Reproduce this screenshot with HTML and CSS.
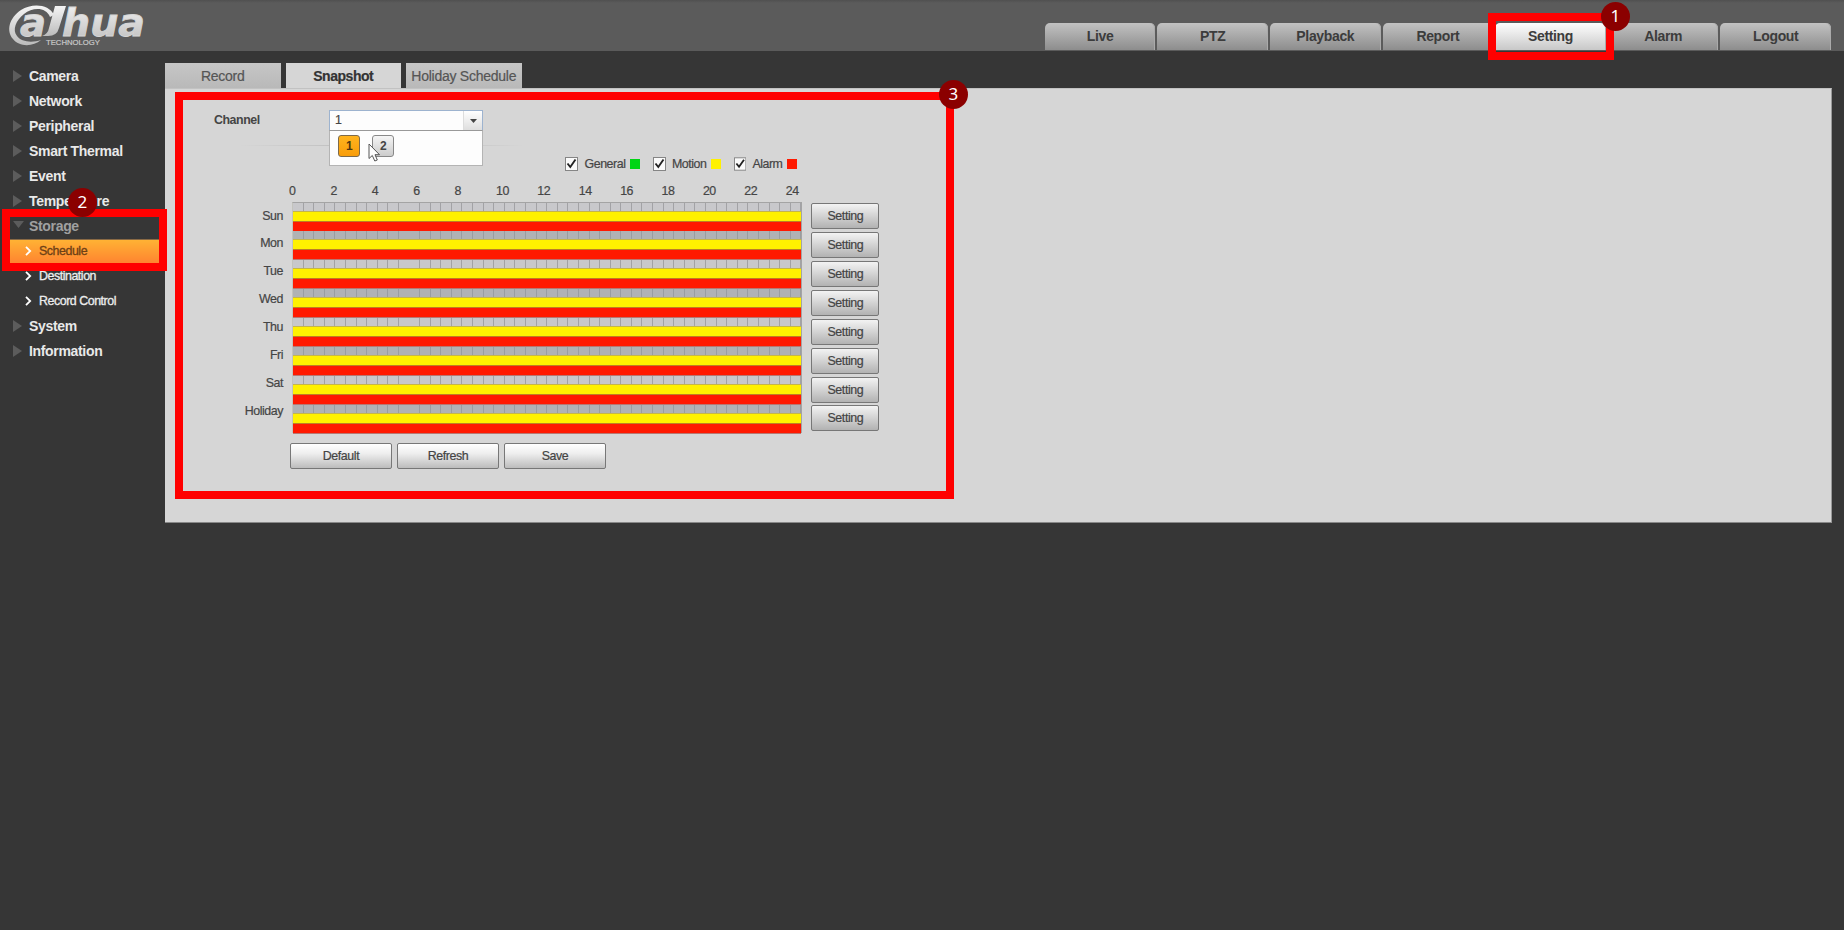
FILE: index.html
```
<!DOCTYPE html>
<html lang="en">
<head>
<meta charset="utf-8">
<title>Storage - Schedule</title>
<link rel="stylesheet" href="styles.css">
</head>
<body>
<header class="header">
  <svg class="logo" width="150" height="51" viewBox="0 0 150 51">
    <defs><linearGradient id="silver" x1="0" y1="0" x2="0" y2="1"><stop offset="0" stop-color="#f4f4f4"/><stop offset="1" stop-color="#bcbcbc"/></linearGradient></defs>
    <path fill="url(#silver)" d="M54 15C49 4 32 3 21 10C9 18 6 31 13 39C19 47 33 47 41 40C32 43 21 42 17 36C12 30 16 20 24 14C33 7 46 7 50 17Z"/>
    <path fill="url(#silver)" d="M55 6H66L59 28Q57 36 48 36H42Q48 34 49 28Z"/>
    <text class="logo-word" x="20" y="35.500" textLength="26" lengthAdjust="spacingAndGlyphs">a</text>
    <text class="logo-word" x="62" y="35.500" textLength="83" lengthAdjust="spacingAndGlyphs">hua</text>
    <text class="logo-tag" x="46" y="45" textLength="54" lengthAdjust="spacingAndGlyphs">TECHNOLOGY</text>
  </svg>
  <nav class="nav">
    <a class="nav-tab">Live</a><a class="nav-tab">PTZ</a><a class="nav-tab">Playback</a><a class="nav-tab">Report</a><a class="nav-tab active">Setting</a><a class="nav-tab">Alarm</a><a class="nav-tab">Logout</a>
  </nav>
</header>
<div class="body">
  <aside class="side">
    <div class="item"><i class="tri"></i>Camera</div>
    <div class="item"><i class="tri"></i>Network</div>
    <div class="item"><i class="tri"></i>Peripheral</div>
    <div class="item"><i class="tri"></i>Smart Thermal</div>
    <div class="item"><i class="tri"></i>Event</div>
    <div class="item"><i class="tri"></i>Temperature</div>
    <div class="item open"><i class="tri"></i>Storage</div>
    <div class="sub current"><svg class="chev" width="7" height="10" viewBox="0 0 7 10"><path d="M1 .8L5.200 5L1 9.200"/></svg>Schedule</div>
    <div class="sub"><svg class="chev" width="7" height="10" viewBox="0 0 7 10"><path d="M1 .8L5.200 5L1 9.200"/></svg>Destination</div>
    <div class="sub"><svg class="chev" width="7" height="10" viewBox="0 0 7 10"><path d="M1 .8L5.200 5L1 9.200"/></svg>Record Control</div>
    <div class="item"><i class="tri"></i>System</div>
    <div class="item"><i class="tri"></i>Information</div>
  </aside>
  <main class="main">
    <div class="tabs"><div class="tab">Record</div><div class="tab on">Snapshot</div><div class="tab">Holiday Schedule</div></div>
    <section class="panel">
      <div class="channel">
        <span class="channel-label">Channel</span>
        <div class="combo"><span class="combo-value">1</span><span class="combo-arrow"></span>
          <div class="drop"><span class="num picked">1</span><span class="num">2</span>
            <svg class="cursor" width="13" height="20" viewBox="0 0 13 20"><path d="M1 1V15.500L4.300 12.500L6.800 18L9.300 17L7 11.700H11.500Z"/></svg>
          </div>
        </div>
      </div>
      <div class="rule"></div>
      <div class="legend">
        <label class="key"><svg class="check" width="13" height="14" viewBox="0 0 13 14"><rect x=".5" y=".5" width="12" height="13"/><path d="M2.500 6.500L5.300 10L10.500 2.500"/></svg>General<i class="chip green"></i></label>
        <label class="key"><svg class="check" width="13" height="14" viewBox="0 0 13 14"><rect x=".5" y=".5" width="12" height="13"/><path d="M2.500 6.500L5.300 10L10.500 2.500"/></svg>Motion<i class="chip yellow"></i></label>
        <label class="key"><svg class="check" width="13" height="14" viewBox="0 0 13 14"><rect x=".5" y=".5" width="12" height="13"/><path d="M2.500 6.500L5.300 10L10.500 2.500"/></svg>Alarm<i class="chip red"></i></label>
      </div>
      <div class="hours"><span>0</span><span>2</span><span>4</span><span>6</span><span>8</span><span>10</span><span>12</span><span>14</span><span>16</span><span>18</span><span>20</span><span>22</span><span>24</span></div>
      <div class="schedule">
        <div class="days"><span>Sun</span><span>Mon</span><span>Tue</span><span>Wed</span><span>Thu</span><span>Fri</span><span>Sat</span><span>Holiday</span></div>
        <div class="chart">
          <div class="day"></div><div class="day"></div><div class="day"></div><div class="day"></div><div class="day"></div><div class="day"></div><div class="day"></div><div class="day"></div>
        </div>
        <div class="edits">
          <button class="btn">Setting</button><button class="btn">Setting</button><button class="btn">Setting</button><button class="btn">Setting</button><button class="btn">Setting</button><button class="btn">Setting</button><button class="btn">Setting</button><button class="btn">Setting</button>
        </div>
      </div>
      <div class="actions"><button class="btn wide">Default</button><button class="btn wide">Refresh</button><button class="btn wide">Save</button></div>
    </section>
  </main>
</div>
<div class="mark mark-nav"></div>
<div class="mark mark-side"></div>
<div class="mark mark-panel"></div>
<div class="step step-nav">1</div>
<div class="step step-side">2</div>
<div class="step step-panel">3</div>
</body>
</html>
```

FILE: styles.css
```
* { box-sizing: border-box; }
body {
  margin: 0;
  height: 930px;
  overflow: hidden;
  background: #363636;
  font-family: "Liberation Sans", Arial, sans-serif;
  font-size: 12.4px;
  letter-spacing: -.45px;
  color: #454545;
}

/* Header */
.header {
  height: 51px;
  display: flex;
  justify-content: space-between;
  align-items: flex-end;
  padding-right: 13px;
  background: linear-gradient(#505050, #5b5b5b 3px, #5b5b5b);
  letter-spacing: 0;
}
.logo { display: block; }
.logo-word { font: italic bold 37px "DejaVu Sans", sans-serif; fill: url(#silver); stroke: #d6d6d6; stroke-width: .8px; }
.logo-tag { font: 8px "Liberation Sans", sans-serif; fill: #c9c9c9; stroke: #c9c9c9; stroke-width: .2px; }
.nav { display: flex; gap: 2px; padding-bottom: 1px; }
.nav-tab {
  width: 110.600px;
  height: 27px;
  line-height: 27px;
  text-align: center;
  font-size: 14px;
  letter-spacing: -.35px;
  font-weight: bold;
  color: #3c3c3c;
  border-radius: 5px 5px 0 0;
  background: linear-gradient(#c2c2c2, #8d8d8d);
  box-shadow: inset -1px 0 #aaa;
}
.nav-tab.active { background: linear-gradient(#fff, #c8c8c8); }

/* Sidebar */
.body { display: flex; height: 471px; }
.side { width: 165px; padding-top: 12.500px; }
.item, .sub { display: flex; align-items: center; height: 25px; }
.item { padding-left: 13px; font-size: 14px; letter-spacing: -.33px; font-weight: bold; color: #e9e9e9; }
.tri {
  width: 9px;
  height: 12px;
  margin-right: 7px;
  background: #5c5c5c;
  clip-path: polygon(0 0, 100% 50%, 0 100%);
}
.open { color: #a0a0a0; }
.open .tri { width: 11px; height: 7px; margin-right: 5px; margin-top: -3px; clip-path: polygon(0 0, 100% 0, 50% 100%); }
.sub { padding-left: 25px; color: #ededed; -webkit-text-stroke: .3px; }
.sub:not(.current) { padding-bottom: 1px; }
.chev { margin-right: 7px; fill: none; stroke: #fff; stroke-width: 1.8; }
.current {
  margin-left: 10px;
  width: 150px;
  padding-left: 15px;
  color: #6d4016;
  background: linear-gradient(#ffb234, #ff8430);
  border-top: 1px solid #8a6a45;
  border-bottom: 1px solid #a98a6a;
}

/* Content */
.main { width: 1667px; padding-top: 12px; }
.tabs { display: flex; gap: 5px; height: 25px; }
.tab {
  width: 115.500px;
  line-height: 26px;
  text-align: center;
  white-space: nowrap;
  font-size: 14px;
  letter-spacing: -.25px;
  color: #555;
  background: linear-gradient(#c6c6c6, #b9b9b9);
}
.tab.on { background: #d6d6d6; color: #333; font-weight: bold; font-size: 14px; letter-spacing: -.45px; }
.panel {
  height: 434.500px;
  padding: 21.500px 0 0 49px;
  background: #d6d6d6;
  border-top: 1px solid #c2c2c2;
  border-right: 1px solid #999;
  border-bottom: 1px solid #888;
}
.channel { display: flex; height: 21px; align-items: center; }
.channel-label { width: 115px; font-weight: bold; margin-top: -3px; }
.combo {
  position: relative;
  display: flex;
  width: 154px;
  height: 21px;
  margin-top: -1px;
  background: #fdfdfd;
  border: 1px solid #9db3cf;
}
.combo-value { flex: 1; padding-left: 5px; line-height: 19px; }
.combo-arrow { width: 19px; background: linear-gradient(#fff, #dedede); border-left: 1px solid #ddd; }
.combo-arrow::after {
  content: "";
  display: block;
  width: 7px;
  height: 4px;
  margin: 8px 0 0 6px;
  background: #444;
  clip-path: polygon(0 0, 100% 0, 50% 100%);
}
.drop {
  position: absolute;
  z-index: 2;
  left: -1px;
  top: 19px;
  display: flex;
  gap: 12px;
  width: 154px;
  height: 36px;
  padding: 4px 0 0 8px;
  background: #fdfdfd;
  border: 1px solid #b4b4b4;
  border-top-color: #999;
}
.num {
  width: 22px;
  height: 22px;
  line-height: 20px;
  text-align: center;
  font-size: 12px;
  font-weight: bold;
  border: 1px solid #888;
  border-radius: 3px;
  background: linear-gradient(#f5f5f5, #ccc);
}
.picked { background: linear-gradient(#ffb41e, #f99d0a); border-color: #7d6a4a; color: #4d3510; }
.cursor { position: absolute; left: 38px; top: 12px; fill: #fff; stroke: #555; }
.rule { width: 310px; height: 1px; margin-top: 13px; background: linear-gradient(90deg, transparent 8%, #bdbdbd 45%, #bdbdbd 70%, transparent); }
.legend { display: grid; grid-template-columns: 87.500px 81px 63px; height: 14px; margin: 11px 0 0 351px; }
.key { display: flex; align-items: center; }
.check { margin-right: 6.500px; }
.check rect { fill: #fafafa; stroke: #858585; }
.check path { fill: none; stroke: #222; stroke-width: 1.9; }
.chip { width: 10px; height: 10px; margin-left: 4.500px; }
.green { background: #00d515; }
.yellow { background: #fff100; }
.red { background: #ff1900; }
.hours { display: grid; grid-template-columns: repeat(13, 41.400px); height: 14px; line-height: 15px; margin: 13px 0 0 75px; }
.schedule { display: flex; margin-top: 4px; height: 231px; }
.days { width: 69px; text-align: right; }
.days span { display: block; height: 27.900px; line-height: 28px; }
.chart { width: 510px; margin-left: 9px; border: solid #a4a4a4; border-width: 1px 1px 0; border-left-color: #c3c3bd; }
.day {
  height: 28.900px;
  background:
    linear-gradient(transparent 8.500px, #c5b54b 8.500px, #c5b54b 9.500px, #fff100 9.500px, #fff100 18.500px, #bd7e25 18.500px, #bd7e25 19.500px, #ff1900 19.500px, #ff1900 28px, #b87772 28px),
    repeating-linear-gradient(90deg, transparent 0, transparent 9.600px, #a2a2a5 9.600px, #a2a2a5 10.590px),
    #c8c8cb;
}
.day:nth-child(even) { background:
    linear-gradient(transparent 8.500px, #c5b54b 8.500px, #c5b54b 9.500px, #fff100 9.500px, #fff100 18.500px, #bd7e25 18.500px, #bd7e25 19.500px, #ff1900 19.500px, #ff1900 28px, #b87772 28px),
    repeating-linear-gradient(90deg, transparent 0, transparent 9.600px, #999da0 9.600px, #999da0 10.590px),
    #b0b2b4; }
.edits { display: flex; flex-direction: column; gap: 2.900px; padding-top: 1.700px; margin-left: 9.400px; }
.btn {
  width: 68px;
  height: 26px;
  flex: none;
  padding: 0;
  font: 12.4px "Liberation Sans", Arial, sans-serif;
  letter-spacing: -.4px;
  color: #444;
  border: 1px solid #777;
  border-radius: 2px;
  background: linear-gradient(#f3f3f3, #b2b2b2);
}
.actions { display: flex; gap: 5px; margin: 10px 0 0 76px; }
.wide { width: 102px; background: linear-gradient(#fff, #eee 40%, #bcbcbc); }
.days, .legend, .hours, .combo-value, .btn, .tab { -webkit-text-stroke: .2px; }

/* Numbered callouts lying over the page */
.mark { position: absolute; z-index: 5; border: 8px solid #f00; }
.mark-nav { left: 1488px; top: 13px; width: 126px; height: 47px; }
.mark-side { left: 2px; top: 209px; width: 165px; height: 62px; }
.mark-panel { left: 175px; top: 92px; width: 779px; height: 407px; }
.step {
  position: absolute;
  z-index: 6;
  width: 29.500px;
  height: 29.500px;
  border-radius: 50%;
  line-height: 28px;
  text-align: center;
  font-family: "Noto Sans", sans-serif;
  font-size: 17px;
  letter-spacing: 0;
  color: #fff;
  background: #8b0000;
}
.step-nav { left: 1600.500px; top: 1.500px; }
.step-side { left: 67.500px; top: 187.500px; }
.step-panel { left: 938.500px; top: 79.500px; }
```
